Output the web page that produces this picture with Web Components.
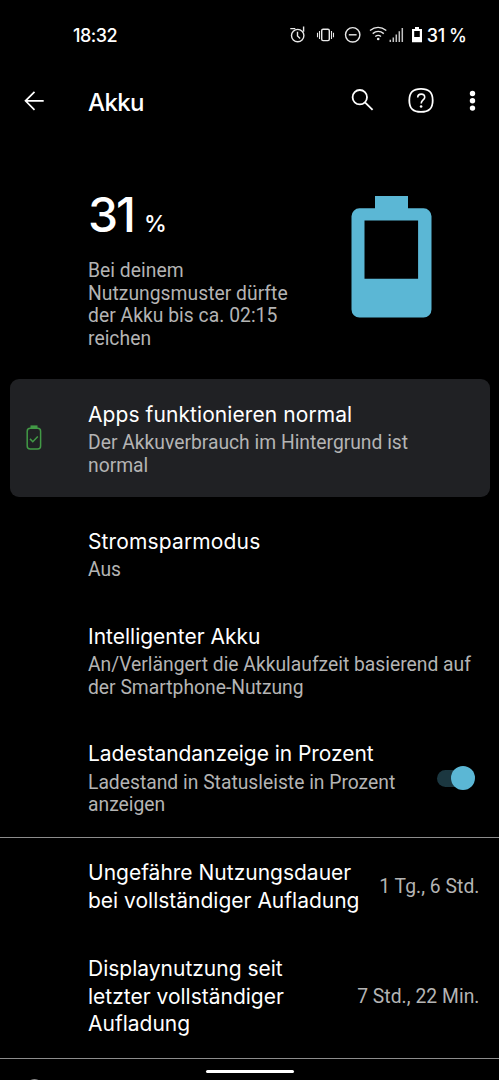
<!DOCTYPE html>
<html lang="de">
<head>
<meta charset="utf-8">
<title>Akku</title>
<style>
  html, body { margin: 0; height: 100%; background: #000; overflow: hidden; }
  body {
    --color-bg: #000;
    --color-surface: #202124;
    --color-fg: #fff;
    --color-muted: #b4b4b4;
    --color-accent: #5bb7d5;
    --color-ok: #429a46;
    --color-divider: #8c8c8c;
    --font-title: Inter, "Open Sans", sans-serif;
    --font-body: Roboto, "Noto Sans", sans-serif;
    color: var(--color-fg);
    font-family: var(--font-body);
  }
</style>
</head>
<body>
<battery-screen>
  <status-bar slot="status" time="18:32" level="31 %"></status-bar>
  <app-bar slot="bar">Akku</app-bar>
  <battery-header value="31">Bei deinem<br>Nutzungsmuster dürfte<br>der Akku bis ca. 02:15<br>reichen</battery-header>
  <pref-row card style="--title-spacing: .08px">
    <battery-ok slot="icon"></battery-ok>
    Apps funktionieren normal
    <span slot="summary">Der Akkuverbrauch im Hintergrund ist<br>normal</span>
  </pref-row>
  <pref-row style="--title-spacing: .14px">Stromsparmodus<span slot="summary">Aus</span></pref-row>
  <pref-row>Intelligenter Akku<span slot="summary">An/Verlängert die Akkulaufzeit basierend auf<br>der Smartphone-Nutzung</span></pref-row>
  <pref-row style="--title-spacing: -.06px">Ladestandanzeige in Prozent<span slot="summary">Ladestand in Statusleiste in Prozent<br>anzeigen</span><toggle-switch slot="end"></toggle-switch></pref-row>
  <pref-row ruled>Ungefähre Nutzungsdauer<br>bei vollständiger Aufladung<span slot="end">1 Tg., 6 Std.</span></pref-row>
  <pref-row>Displaynutzung seit<br>letzter vollständiger<br>Aufladung<span slot="end">7 Std., 22 Min.</span></pref-row>
  <info-footer></info-footer>
  <nav-handle slot="nav"></nav-handle>
</battery-screen>

<script>
// Attaches an open root with the element's own styles and markup.
function mount(el, css, html) {
  el.attachShadow({ mode: "open" }).innerHTML = `<style>${css}</style>${html}`;
}

customElements.define("battery-screen", class extends HTMLElement {
  constructor() {
    super();
    mount(this, `
      :host { position: relative; display: flex; flex-direction: column; width: 100%; height: 100vh; overflow: hidden; background: var(--color-bg); }
      ::slotted(*) { flex: none; }
      main { display: flex; flex-direction: column; flex: none; }
      .nav { position: absolute; left: 0; right: 0; bottom: 7px; display: flex; justify-content: center; }
    `, `
      <slot name="status"></slot>
      <slot name="bar"></slot>
      <main><slot></slot></main>
      <div class="nav"><slot name="nav"></slot></div>
    `);
  }
});

customElements.define("status-bar", class extends HTMLElement {
  constructor() {
    super();
    mount(this, `
      :host { display: flex; align-items: center; justify-content: space-between; box-sizing: border-box; height: 70px; padding: 0 32.5px 0 73px; font: 500 18px/22px var(--font-title); }
      .time { margin-top: 2px; letter-spacing: -.5px; }
      .level { margin: 2px 0 0 3px; letter-spacing: -.45px; }
      .side { display: flex; align-items: center; }
      svg { display: block; flex: none; }
    `, `
      <span class="time">${this.getAttribute("time")}</span>
      <div class="side">
        <svg width="137" height="22" viewBox="287 24 137 22" fill="none" stroke="#e8e8e8" stroke-width="1.4">
          <circle cx="297.7" cy="35.6" r="6.2"/>
          <path d="M297.5 31.8v4.2l2.6 2.4M290.3 28.6h5M303.6 26.5v5.2"/>
          <rect x="321.7" y="29.2" width="7.6" height="11.4" rx="1.4"/>
          <path d="M319.5 31v8M317.5 32.8v4.4M331.5 31v8M333.5 32.8v4.4" stroke-width="1.1"/>
          <circle cx="352.7" cy="34.8" r="7.2"/>
          <path d="M348.8 34.8h7.8"/>
          <path d="M370 30.5Q378 24.3 386.3 30.5M372.7 33.6Q378.2 29.2 383.8 33.6M375.3 36.5Q378.2 34.2 381 36.5" stroke-width="1.4"/>
          <circle cx="378.2" cy="39" r="1.3" fill="#e8e8e8" stroke="none"/>
          <path d="M390.3 42v-2.2M393.3 42v-4.5M396.3 42v-7.5M399.3 42V31.2M402.3 42V28" stroke="#c4c4c4" stroke-width="1.5"/>
          <path d="M415 27h4v2h3v13.3h-10V29h3zM414.2 31v6h5.6v-6z" fill="#fff" fill-rule="evenodd" stroke="none"/>
        </svg>
        <span class="level">${this.getAttribute("level")}</span>
      </div>
    `);
  }
});

customElements.define("app-bar", class extends HTMLElement {
  constructor() {
    super();
    mount(this, `
      :host { display: grid; grid-template-columns: 64px 1fr auto; align-items: center; height: 62px; padding-left: 24px; }
      h1 { margin: 3px 0 0; font: 500 24px/30px var(--font-title); letter-spacing: -.6px; }
      svg { display: block; }
    `, `
      <svg width="20" height="20" viewBox="24 91 20 20" fill="none" stroke="#fff" stroke-width="1.7"><path d="M43.7 100.8H25.6M34.5 91.8l-9 9 9 9"/></svg>
      <h1><slot></slot></h1>
      <svg width="159" height="30" viewBox="340 86 159 30" fill="none" stroke="#fff" stroke-width="1.8">
        <circle cx="359.8" cy="97.2" r="7.2"/><path d="M365 102.3l7.6 7.6"/>
        <path d="M421 88.9c8.3 0 11.7 3.6 11.7 11.5s-3.4 11.5-11.7 11.5-11.7-3.6-11.7-11.5 3.4-11.5 11.7-11.5z"/>
        <path d="M417.7 97.4c.1-4.5 7-4.3 7-.2 0 2.7-3.5 2.8-3.5 6.2" stroke-width="1.6"/><circle cx="421.1" cy="106.5" r="1.3" fill="#fff" stroke="none"/>
        <g fill="#fff" stroke="none"><circle cx="472.5" cy="93.5" r="2.7"/><circle cx="472.5" cy="100.8" r="2.7"/><circle cx="472.5" cy="108.1" r="2.7"/></g>
      </svg>
    `);
  }
});

customElements.define("battery-header", class extends HTMLElement {
  constructor() {
    super();
    mount(this, `
      :host { display: flex; justify-content: space-between; align-items: flex-start; height: 247px; box-sizing: border-box; padding: 54px 67px 0 88px; }
      .value { display: flex; align-items: baseline; gap: 10px; font: 500 48px/58px var(--font-title); letter-spacing: -2px; }
      small { font-size: 23px; letter-spacing: 0; }
      p { margin: 7px 0 0; font-size: 19.3px; line-height: 22.6px; color: var(--color-muted); letter-spacing: .03px; white-space: nowrap; }
      svg { display: block; margin-top: 10px; }
    `, `
      <div>
        <div class="value">${this.getAttribute("value")}<small>%</small></div>
        <p><slot></slot></p>
      </div>
      <svg width="81" height="122" viewBox="351 196 81 122" fill="#5bb7d5">
        <path fill-rule="evenodd" d="M375 196h33v12.3h15.5a8 8 0 0 1 8 8v93.2a8 8 0 0 1-8 8h-64a8 8 0 0 1-8-8v-93.2a8 8 0 0 1 8-8H375zM364.5 220.4v58.3h53.6v-58.3z"/>
      </svg>
    `);
  }
});

customElements.define("battery-ok", class extends HTMLElement {
  constructor() {
    super();
    mount(this, `
      :host { display: block; padding-left: 2px; color: var(--color-ok); }
      svg { display: block; }
    `, `
      <svg width="16" height="26" viewBox="26 425 16 26" fill="none" stroke="currentColor" stroke-width="1.5">
        <rect x="27.2" y="428.3" width="13.4" height="20.6" rx="3"/><path d="M30.5 426.7h7" stroke-width="2.6"/><path d="M30 438.9l2.8 2.8 5-5.2"/>
      </svg>
    `);
  }
});

customElements.define("toggle-switch", class extends HTMLElement {
  constructor() {
    super();
    mount(this, `
      :host { display: flex; align-items: center; justify-content: flex-end; width: 35px; height: 17px; margin: 0 8px 1px 0; border-radius: 9px; background: #1b3740; }
      i { flex: none; width: 24.4px; height: 24.4px; margin-right: -3.5px; border-radius: 50%; background: var(--color-accent); }
    `, `<i></i>`);
  }
});

customElements.define("pref-row", class extends HTMLElement {
  constructor() {
    super();
    mount(this, `
      :host { display: grid; grid-template-columns: 64px 1fr auto; align-items: center; box-sizing: border-box; padding: 20.8px 19.5px 20px 24px; }
      :host([card]) { height: 117.5px; margin: 0 9.5px 10.7px; padding: 2.5px 9.5px 0 14.5px; border-radius: 9px; background: var(--color-surface); }
      :host([card]) .icon { margin-top: -2.5px; }
      :host([ruled]) { border-top: 1.3px solid var(--color-divider); }
      .title { font: 400 21px/27.7px var(--font-title); letter-spacing: var(--title-spacing, 0); white-space: nowrap; }
      slot[name="summary"] { display: block; margin-top: 3.8px; font-size: 19.3px; line-height: 22.6px; color: var(--color-muted); white-space: nowrap; }
      .end { font-size: 19.3px; color: var(--color-muted); letter-spacing: .05px; white-space: nowrap; }
    `, `
      <div class="icon"><slot name="icon"></slot></div>
      <div>
        <div class="title"><slot></slot></div>
        ${this.querySelector('[slot="summary"]') ? `<slot name="summary"></slot>` : ""}
      </div>
      <div class="end"><slot name="end"></slot></div>
    `);
  }
});

// Only the top edge of the footer's info icon shows above the fold.
customElements.define("info-footer", class extends HTMLElement {
  constructor() {
    super();
    mount(this, `
      :host { display: block; border-top: 1.3px solid var(--color-divider); padding: 20px 0 0 23px; }
      svg { display: block; }
    `, `<svg width="23" height="23" viewBox="0 0 23 23" fill="none" stroke="#b4b4b4" stroke-width="2"><circle cx="11.5" cy="11.5" r="10.2"/><path d="M11.5 10v7M11.5 6v2"/></svg>`);
  }
});

customElements.define("nav-handle", class extends HTMLElement {
  constructor() {
    super();
    mount(this, `:host { display: block; width: 88px; height: 3px; border-radius: 2px; background: #fff; }`, ``);
  }
});
</script>
</body>
</html>
